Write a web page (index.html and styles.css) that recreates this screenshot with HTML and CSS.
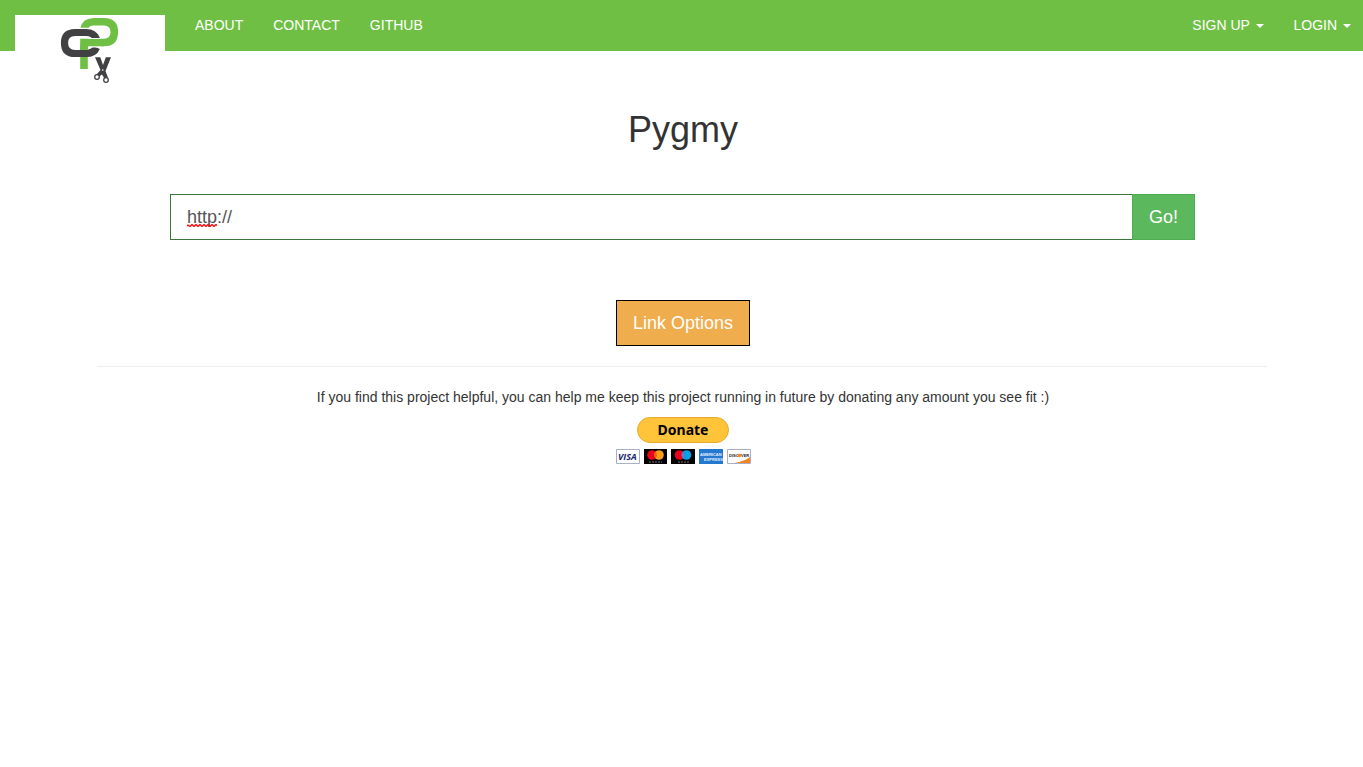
FILE: index.html
```html
<!DOCTYPE html>
<html lang="en">
<head>
<meta charset="utf-8">
<title>Pygmy</title>
<link rel="stylesheet" href="styles.css">
</head>
<body>
<nav class="navbar">
  <a class="brand" href="#" aria-label="Pygmy home">
    <svg class="logo" viewBox="0 0 80 80" fill="none" aria-hidden="true">
      <path d="M34 61V34.5H54Q64.300 34.500 64.300 24Q64.300 13.700 54 13.700H44Q35.500 13.700 34 21" stroke="#6fbf44" stroke-width="7.600"/>
      <path d="M29 19.800H40Q44 20 47 23V29H29Z" fill="#fff"/>
      <path d="M46.500 31Q44 24.500 36 24.500H25Q14.500 24.500 14.500 35Q14.500 45.500 25 45.500H36Q44 45.500 46.500 39.500" stroke="#414143" stroke-width="7.200"/>
      <path d="M38.500 30H51V39.500H38.500Z" fill="#fff"/>
      <path d="M30.200 42V37.500Q31 31 38 31H54V38.300H37.800V42Z" fill="#6fbf44"/>
      <path d="M45 49.300H50.300L53 57L55.800 49.300H61L55.500 63L58 69.500L54.500 70.500L52 66.500L48.500 69L46.500 66.500L50.500 62Z" fill="#414143"/>
      <circle cx="52.800" cy="62" r=".8" fill="#fff"/>
      <circle cx="47" cy="69" r="2.300" fill="#fff" stroke="#414143" stroke-width="1.300"/>
      <circle cx="56" cy="72" r="2.300" fill="#fff" stroke="#414143" stroke-width="1.300"/>
    </svg>
  </a>
  <div class="nav-links">
    <a class="nav-link" href="#">ABOUT</a>
    <a class="nav-link" href="#">CONTACT</a>
    <a class="nav-link" href="#">GITHUB</a>
  </div>
  <div class="nav-account">
    <a class="nav-link" href="#">SIGN UP <span class="caret"></span></a>
    <a class="nav-link" href="#">LOGIN <span class="caret"></span></a>
  </div>
</nav>
<main class="page">
  <div class="container">
    <h1 class="title">Pygmy</h1>
    <form class="shorten">
      <div class="field">
        <input class="url" type="text" value="http://" aria-label="Long URL" spellcheck="false">
        <svg class="squiggle" viewBox="0 0 30 3" aria-hidden="true"><path d="M0 2L1 1L3 2.500L5 .5L7 2.500L9 .5L11 2.500L13 .5L15 2.500L17 .5L19 2.500L21 .5L23 2.500L25 .5L27 2.500L29 .5L30 1.500" fill="none" stroke="#f00" stroke-width="1.300"/></svg>
      </div>
      <button class="btn go" type="button">Go!</button>
    </form>
    <div class="extras">
      <button class="btn options" type="button">Link Options</button>
    </div>
    <hr class="rule">
    <div class="extras">
      <p class="note">If you find this project helpful, you can help me keep this project running in future by donating any amount you see fit :)</p>
      <button class="donate" type="button">Donate</button>
      <svg class="cards" viewBox="0 0 135 15" role="img" aria-label="Accepted cards">
        <g stroke="#a9afc4" fill="#fff"><path d="M.5.5H23.500V14.500H.5Z"/><path d="M111.500.5H134.500V14.500H111.500Z"/></g>
        <path d="M28 0H51V15H28ZM55 0H79V15H55Z" fill="#000"/>
        <text class="card-visa" x="2" y="11" fill="#20256d">VISA</text>
        <circle cx="36" cy="6" r="4.800" fill="#eb001b"/><circle cx="43" cy="6" r="4.800" fill="#f79e1b"/><path d="M39.500 2.700Q42.500 6 39.500 9.300Q36.500 6 39.500 2.700Z" fill="#ff5f00"/>
        <circle cx="63.500" cy="6" r="4.800" fill="#eb001b"/><circle cx="70.500" cy="6" r="4.800" fill="#00a2e5"/><path d="M67 2.700Q70 6 67 9.300Q64 6 67 2.700Z" fill="#7375cf"/>
        <path d="M33 13H46M62 13H73" stroke="#777" stroke-dasharray="2 1"/>
        <path d="M83 0H107V15H83Z" fill="#2478cf"/>
        <text class="card-small" x="84" y="7" fill="#e4f1ff">AMERICAN</text>
        <text class="card-small" x="88" y="12" fill="#e4f1ff">EXPRESS</text>
        <path d="M134 8V14H118Q129 12 134 8Z" fill="#f58220"/>
        <text class="card-small" x="113" y="8" fill="#222">DISC</text>
        <circle cx="123.500" cy="6.500" r="1.800" fill="#f58220"/>
        <text class="card-small" x="125" y="8" fill="#222">VER</text>
      </svg>
    </div>
  </div>
</main>
</body>
</html>
```
FILE: styles.css
```css
* { box-sizing: border-box; }

body {
  margin: 0;
  background: #fff;
  color: #333;
  font: 14px/20px "Liberation Sans", Arial, sans-serif;
}

.navbar {
  display: flex;
  height: 51px;
  padding-left: 15px;
  background: #6fbf44;
}

.brand {
  width: 150px;
  height: 75px;
  margin-top: 15px;
  padding-left: 35px;
  background: #fff;
}

.logo {
  display: block;
  width: 80px;
  height: 80px;
  margin-top: -7px;
}

.nav-links,
.nav-account {
  display: flex;
}

.nav-links { margin-left: 15px; }

.nav-account {
  margin-left: auto;
  margin-right: -3px;
}

.nav-link {
  padding: 15px;
  color: #fff;
  text-decoration: none;
}

.caret {
  display: inline-block;
  margin-left: 2px;
  vertical-align: middle;
  border-top: 4px solid #fff;
  border-left: 4px solid transparent;
  border-right: 4px solid transparent;
}

.page { padding: 56px 0 0 1px; }

.container {
  max-width: 1170px;
  margin: 0 auto;
}

.title {
  margin: 0;
  padding-left: 2px;
  font-size: 36px;
  font-weight: 400;
  line-height: 46px;
  text-align: center;
}

.shorten {
  display: flex;
  margin: 41px 72px 60px 73px;
}

.field {
  position: relative;
  flex: 1;
}

.url {
  display: block;
  width: 100%;
  height: 46px;
  padding: 10px 16px;
  border: 1px solid #3c763d;
  border-right: 0;
  outline: 0;
  background: #fff;
  color: #555;
  font: 18px/24px "Liberation Sans", Arial, sans-serif;
}

.squiggle {
  position: absolute;
  left: 17px;
  top: 30px;
  width: 30px;
  height: 3px;
}

.btn {
  height: 46px;
  padding: 10px 16px;
  color: #fff;
  font: 18px/24px "Liberation Sans", Arial, sans-serif;
}

.go {
  border: 1px solid #4cae4c;
  background: #5cb85c;
}

.extras {
  display: flex;
  flex-direction: column;
  align-items: center;
  padding-left: 2px;
}

.options {
  border: 1px solid #000;
  background: #f0ad4e;
}

.rule {
  margin: 20px 0;
  border: 0;
  border-top: 1px solid #eee;
}

.note { margin: 0 0 10px; }

.donate {
  width: 92px;
  height: 26px;
  padding: 0;
  border: 1px solid #e5ab2b;
  border-radius: 13px;
  background: #ffc439;
  color: #000;
  font: 700 14px/24px "Noto Sans", sans-serif;
}

.cards {
  width: 135px;
  height: 15px;
  margin-top: 6px;
}

.card-visa { font: italic 700 9px "Open Sans", sans-serif; }
.card-small { font: 700 4px "Liberation Sans", sans-serif; }
```
